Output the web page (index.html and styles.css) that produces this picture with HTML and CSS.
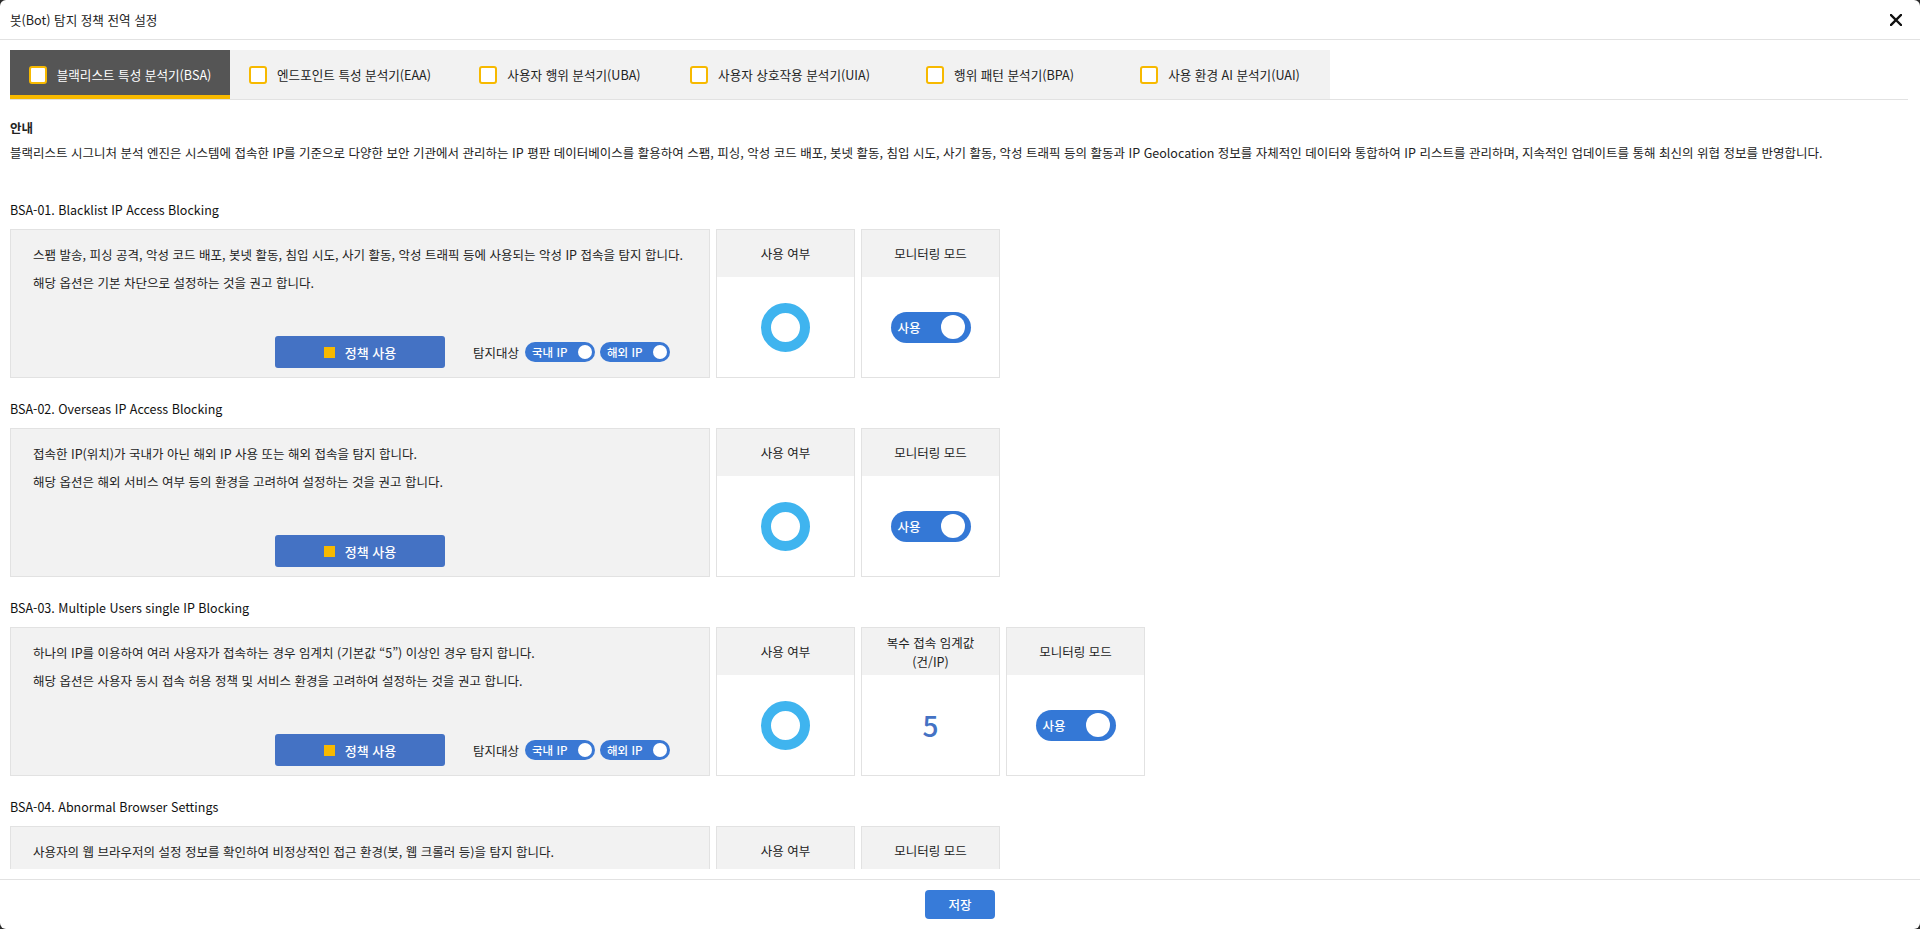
FILE: index.html
```html
<!DOCTYPE html>
<html lang="ko">
<head>
<meta charset="utf-8">
<title>봇(Bot) 탐지 정책 전역 설정</title>
<link rel="stylesheet" href="styles.css">
</head>
<body>
<div class="modal">
  <header class="modal-head">
    <h1 class="modal-title">봇(Bot) 탐지 정책 전역 설정</h1>
    <button class="close" type="button" aria-label="닫기">
      <svg width="12" height="12" viewBox="0 0 12 12"><path d="M1 1L11 11M11 1L1 11" stroke="#111" stroke-width="2.4" stroke-linecap="square"/></svg>
    </button>
  </header>

  <nav class="tabs">
    <div class="tab active"><span class="chk"></span><span class="tab-label">블랙리스트 특성 분석기(BSA)</span></div>
    <div class="tab"><span class="chk"></span><span class="tab-label">엔드포인트 특성 분석기(EAA)</span></div>
    <div class="tab"><span class="chk"></span><span class="tab-label">사용자 행위 분석기(UBA)</span></div>
    <div class="tab"><span class="chk"></span><span class="tab-label">사용자 상호작용 분석기(UIA)</span></div>
    <div class="tab"><span class="chk"></span><span class="tab-label">행위 패턴 분석기(BPA)</span></div>
    <div class="tab"><span class="chk"></span><span class="tab-label">사용 환경 AI 분석기(UAI)</span></div>
  </nav>

  <main class="content">
    <section class="guide">
      <h2 class="guide-title">안내</h2>
      <p class="guide-text">블랙리스트 시그니처 분석 엔진은 시스템에 접속한 IP를 기준으로 다양한 보안 기관에서 관리하는 IP 평판 데이터베이스를 활용하여 스팸, 피싱, 악성 코드 배포, 봇넷 활동, 침입 시도, 사기 활동, 악성 트래픽 등의 활동과 IP Geolocation 정보를 자체적인 데이터와 통합하여 IP 리스트를 관리하며, 지속적인 업데이트를 통해 최신의 위협 정보를 반영합니다.</p>
    </section>

    <section class="policy">
      <h3 class="policy-title">BSA-01. Blacklist IP Access Blocking</h3>
      <div class="policy-row">
        <div class="desc">
          <p>스팸 발송, 피싱 공격, 악성 코드 배포, 봇넷 활동, 침입 시도, 사기 활동, 악성 트래픽 등에 사용되는 악성 IP 접속을 탐지 합니다.</p>
          <p>해당 옵션은 기본 차단으로 설정하는 것을 권고 합니다.</p>
          <div class="actions">
            <button class="btn-policy" type="button"><span class="sq"></span>정책 사용</button>
            <span class="target-label">탐지대상</span>
            <span class="pill">국내 IP<i class="knob"></i></span>
            <span class="pill">해외 IP<i class="knob"></i></span>
          </div>
        </div>
        <div class="opt"><div class="opt-head">사용 여부</div><div class="opt-body"><span class="ring"></span></div></div>
        <div class="opt"><div class="opt-head">모니터링 모드</div><div class="opt-body"><span class="switch">사용<i class="switch-knob"></i></span></div></div>
      </div>
    </section>

    <section class="policy">
      <h3 class="policy-title">BSA-02. Overseas IP Access Blocking</h3>
      <div class="policy-row">
        <div class="desc">
          <p>접속한 IP(위치)가 국내가 아닌 해외 IP 사용 또는 해외 접속을 탐지 합니다.</p>
          <p>해당 옵션은 해외 서비스 여부 등의 환경을 고려하여 설정하는 것을 권고 합니다.</p>
          <div class="actions">
            <button class="btn-policy" type="button"><span class="sq"></span>정책 사용</button>
          </div>
        </div>
        <div class="opt"><div class="opt-head">사용 여부</div><div class="opt-body"><span class="ring"></span></div></div>
        <div class="opt"><div class="opt-head">모니터링 모드</div><div class="opt-body"><span class="switch">사용<i class="switch-knob"></i></span></div></div>
      </div>
    </section>

    <section class="policy">
      <h3 class="policy-title">BSA-03. Multiple Users single IP Blocking</h3>
      <div class="policy-row">
        <div class="desc">
          <p>하나의 IP를 이용하여 여러 사용자가 접속하는 경우 임계치 (기본값 “5”) 이상인 경우 탐지 합니다.</p>
          <p>해당 옵션은 사용자 동시 접속 허용 정책 및 서비스 환경을 고려하여 설정하는 것을 권고 합니다.</p>
          <div class="actions">
            <button class="btn-policy" type="button"><span class="sq"></span>정책 사용</button>
            <span class="target-label">탐지대상</span>
            <span class="pill">국내 IP<i class="knob"></i></span>
            <span class="pill">해외 IP<i class="knob"></i></span>
          </div>
        </div>
        <div class="opt"><div class="opt-head">사용 여부</div><div class="opt-body"><span class="ring"></span></div></div>
        <div class="opt"><div class="opt-head opt-head-2">복수 접속 임계값<br>(건/IP)</div><div class="opt-body"><span class="num">5</span></div></div>
        <div class="opt"><div class="opt-head">모니터링 모드</div><div class="opt-body"><span class="switch">사용<i class="switch-knob"></i></span></div></div>
      </div>
    </section>

    <section class="policy">
      <h3 class="policy-title">BSA-04. Abnormal Browser Settings</h3>
      <div class="policy-row">
        <div class="desc">
          <p>사용자의 웹 브라우저의 설정 정보를 확인하여 비정상적인 접근 환경(봇, 웹 크롤러 등)을 탐지 합니다.</p>
          <p>해당 옵션은 기본 차단으로 설정하는 것을 권고 합니다.</p>
          <div class="actions">
            <button class="btn-policy" type="button"><span class="sq"></span>정책 사용</button>
          </div>
        </div>
        <div class="opt"><div class="opt-head">사용 여부</div><div class="opt-body"><span class="ring"></span></div></div>
        <div class="opt"><div class="opt-head">모니터링 모드</div><div class="opt-body"><span class="switch">사용<i class="switch-knob"></i></span></div></div>
      </div>
    </section>
  </main>

  <footer class="modal-foot">
    <button class="btn-save" type="button">저장</button>
  </footer>
</div>
</body>
</html>
```

FILE: styles.css
```css
* { box-sizing: border-box; }

html, body {
  margin: 0;
  padding: 0;
  height: 100%;
}

body {
  background: #2a2a2a;
  font-family: "Noto Sans CJK KR", "Noto Sans", sans-serif;
  font-size: 12.5px;
  color: #222;
}

.modal {
  width: 1920px;
  height: 929px;
  background: #fff;
  border-radius: 6px;
  overflow: hidden;
  display: flex;
  flex-direction: column;
}

/* header */
.modal-head {
  height: 40px;
  flex: none;
  border-bottom: 1px solid #e2e2e2;
  display: flex;
  align-items: center;
  justify-content: space-between;
  padding: 0 18px 0 10px;
}

.modal-title {
  margin: 0;
  font-size: 12.6px;
  font-weight: 400;
  line-height: 18px;
  color: #222;
}

.close {
  border: 0;
  background: none;
  padding: 0;
  width: 12px;
  height: 12px;
  display: flex;
  cursor: pointer;
}

/* tabs */
.tabs {
  flex: none;
  margin: 10px 12px 0 10px;
  height: 50px;
  border-bottom: 1px solid #e2e2e2;
  display: flex;
}

.tab {
  width: 220px;
  height: 49px;
  background: #f2f2f2;
  display: flex;
  align-items: center;
  justify-content: center;
  gap: 10px;
  color: #222;
  font-size: 12.6px;
  white-space: nowrap;
}

.tab.active {
  background: #555;
  color: #fff;
  box-shadow: inset 0 -4px 0 #f7b900;
}

.chk {
  width: 18px;
  height: 18px;
  border: 2px solid #f7b900;
  border-radius: 3px;
  background: #fff;
  flex: none;
}

.tab-label { line-height: 18px; }

/* content */
.content {
  flex: 1;
  overflow: hidden;
  margin-bottom: 10px;
  padding: 19px 12px 0 10px;
}

.guide { margin-bottom: 39px; }

.guide-title {
  margin: 0;
  font-size: 12.5px;
  font-weight: 700;
  line-height: 18px;
}

.guide-text {
  margin: 7px 0 0;
  line-height: 18px;
}

.policy { margin-top: 22px; }

.policy-title {
  margin: 0 0 10px;
  font-size: 12.5px;
  font-weight: 400;
  color: #111;
  line-height: 18px;
}

.policy-row {
  display: flex;
  gap: 6px;
  height: 149px;
}

.desc {
  width: 700px;
  flex: none;
  background: #f2f2f2;
  border: 1px solid #e2e2e2;
  padding: 11px 10px 9px 22px;
  display: flex;
  flex-direction: column;
}

.desc p {
  margin: 0;
  line-height: 28px;
  white-space: nowrap;
}

.actions {
  margin-top: auto;
  margin-left: 242px;
  height: 32px;
  display: flex;
  align-items: center;
}

.btn-policy {
  width: 170px;
  height: 32px;
  border: 0;
  border-radius: 3px;
  background: #4472c4;
  color: #fff;
  font-family: inherit;
  font-size: 13px;
  font-weight: 500;
  display: flex;
  align-items: center;
  justify-content: center;
  gap: 10px;
  padding: 0;
}

.sq {
  width: 11px;
  height: 11px;
  background: #f7b900;
  flex: none;
}

.target-label {
  margin-left: 28px;
  margin-right: 6px;
  font-size: 12.5px;
}

.pill {
  width: 70px;
  height: 20px;
  border-radius: 10px;
  background: #3a78d4;
  color: #fff;
  font-size: 11.5px;
  font-weight: 500;
  display: flex;
  align-items: center;
  justify-content: space-between;
  padding: 0 3px 0 7px;
  margin-right: 5px;
}

.knob {
  width: 14px;
  height: 14px;
  border-radius: 50%;
  background: #fff;
}

.opt {
  width: 139px;
  flex: none;
  border: 1px solid #e2e2e2;
  display: flex;
  flex-direction: column;
}

.opt-head {
  height: 47px;
  flex: none;
  background: #f2f2f2;
  display: flex;
  align-items: center;
  justify-content: center;
  text-align: center;
  line-height: 19px;
}

.opt-body {
  flex: 1;
  background: #fff;
  display: flex;
  align-items: center;
  justify-content: center;
}

.ring {
  width: 49px;
  height: 49px;
  border-radius: 50%;
  border: 10px solid #3fb4ef;
  background: #fff;
}

.switch {
  width: 80px;
  height: 31px;
  border-radius: 16px;
  background: #3478d6;
  color: #fff;
  font-size: 12.5px;
  font-weight: 500;
  display: flex;
  align-items: center;
  justify-content: space-between;
  padding: 0 6px 0 7px;
}

.switch-knob {
  width: 24px;
  height: 24px;
  border-radius: 50%;
  background: #fff;
}

.num {
  font-size: 28px;
  font-weight: 500;
  color: #4472c4;
  line-height: 1;
}

/* footer */
.modal-foot {
  flex: none;
  height: 50px;
  border-top: 1px solid #e2e2e2;
  display: flex;
  justify-content: center;
  padding-top: 10px;
}

.btn-save {
  width: 70px;
  height: 29px;
  border: 0;
  border-radius: 4px;
  background: #377bd9;
  color: #fff;
  font-family: inherit;
  font-size: 12.5px;
  font-weight: 500;
}
```
